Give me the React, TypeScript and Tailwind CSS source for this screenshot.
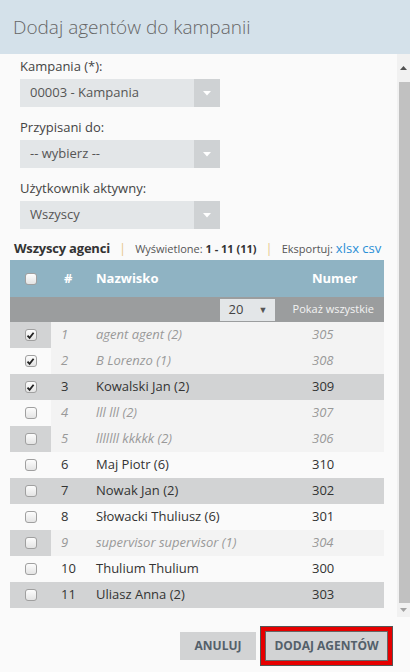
import React from "react";

type Agent = { n: number; name: string; num: string; active: boolean; checked: boolean };

const agents: Agent[] = [
  { n: 1, name: "agent agent (2)", num: "305", active: false, checked: true },
  { n: 2, name: "B Lorenzo (1)", num: "308", active: false, checked: true },
  { n: 3, name: "Kowalski Jan (2)", num: "309", active: true, checked: true },
  { n: 4, name: "lll lll (2)", num: "307", active: false, checked: false },
  { n: 5, name: "lllllll kkkkk (2)", num: "306", active: false, checked: false },
  { n: 6, name: "Maj Piotr (6)", num: "310", active: true, checked: false },
  { n: 7, name: "Nowak Jan (2)", num: "302", active: true, checked: false },
  { n: 8, name: "Słowacki Thuliusz (6)", num: "301", active: true, checked: false },
  { n: 9, name: "supervisor supervisor (1)", num: "304", active: false, checked: false },
  { n: 10, name: "Thulium Thulium", num: "300", active: true, checked: false },
  { n: 11, name: "Uliasz Anna (2)", num: "303", active: true, checked: false },
];

function Checkbox({ checked }: { checked?: boolean }) {
  return (
    <span className="flex h-[12px] w-[12px] items-center justify-center rounded-[3px] border border-[#a0a0a0] bg-gradient-to-b from-[#fdfdfd] to-[#e4e4e4]">
      {checked && (
        <svg width="9" height="9" viewBox="0 0 9 9">
          <path d="M1.5 4.6 L3.6 6.8 L7.6 1.8" fill="none" stroke="#222" strokeWidth="1.8" />
        </svg>
      )}
    </span>
  );
}

function Select({ value }: { value: string }) {
  return (
    <div className="flex h-[28px] w-[200px] bg-[#e3e6e8]">
      <div className="flex flex-1 items-center pl-[10px] text-[13px] text-[#555]">{value}</div>
      <div className="flex w-[26px] items-center justify-center bg-[#cfd2d4]">
        <svg width="8" height="5" viewBox="0 0 8 5">
          <path d="M0 0 H8 L4 4.5 Z" fill="#fff" />
        </svg>
      </div>
    </div>
  );
}

function Field({ label, value }: { label: string; value: string }) {
  return (
    <div className="mb-[11px]">
      <div className="mb-[4px] h-[18px] text-[13px] leading-[18px] text-[#444]">{label}</div>
      <Select value={value} />
    </div>
  );
}

export default function App() {
  return (
    <div className="flex h-[672px] w-[410px] flex-col overflow-hidden bg-[#fafafa] font-['Open_Sans',sans-serif]">
      {/* Header */}
      <div className="flex h-[54px] shrink-0 items-center bg-[#d4e1ea] px-[13px] text-[19px] font-light text-[#666]">
        Dodaj agentów do kampanii
      </div>

      {/* Body */}
      <div className="flex h-[563px] shrink-0">
        <div className="flex-1 overflow-hidden pl-[10px] pr-[13px] pt-[3px]">
          <div className="pl-[10px]">
            <Field label="Kampania (*):" value="00003 - Kampania" />
            <Field label="Przypisani do:" value="-- wybierz --" />
            <Field label="Użytkownik aktywny:" value="Wszyscy" />
          </div>

          <div className="-mt-[1px] flex h-[20px] items-center whitespace-nowrap pl-[4px] text-[11px] text-[#555]">
            <span className="text-[13px] font-bold tracking-[-0.2px] text-[#333]">Wszyscy agenci</span>
            <span className="mx-[9px] text-[13px] text-[#e7c98f]">|</span>
            <span>
              Wyświetlone: <b className="font-bold text-[#333]">1 - 11 (11)</b>
            </span>
            <span className="mx-[9px] text-[13px] text-[#e7c98f]">|</span>
            <span>
              Eksportuj: <span className="text-[13px] text-[#2a8fd6]">xlsx csv</span>
            </span>
          </div>

          <div className="mt-[1px] w-[374px]">
            <div className="flex h-[37px] items-center bg-[#8fb3c3] text-[13px] font-bold text-white">
              <div className="flex w-[41px] justify-center">
                <Checkbox />
              </div>
              <div className="w-[45px] pl-[13px]">#</div>
              <div className="flex-1">Nazwisko</div>
              <div className="w-[72px]">Numer</div>
            </div>
            <div className="flex h-[25px] items-center justify-end bg-[#9b9d9e] pr-[10px]">
              <div className="flex h-[22px] w-[55px] items-center justify-between bg-[#e3e6e8] pl-[9px] pr-[7px] text-[13px] text-[#444]">
                <span>20</span>
                <span className="text-[9px] text-[#555]">▼</span>
              </div>
              <span className="ml-[18px] text-[11px] text-[#f3f3f3]">Pokaż wszystkie</span>
            </div>

            {agents.map((a) => {
              const odd = a.n % 2 === 1;
              const cbBg = odd ? "bg-[#d2d3d4]" : "bg-[#fafafa]";
              const restBg = a.active ? (odd ? "bg-[#d2d3d4]" : "bg-[#fafafa]") : "bg-[#f3f3f3]";
              const txt = a.active ? "text-[#333]" : "italic text-[#999]";
              return (
                <div key={a.n} className="flex h-[26px] text-[13px]">
                  <div className={`flex w-[41px] items-center justify-center ${cbBg}`}>
                    <Checkbox checked={a.checked} />
                  </div>
                  <div className={`flex flex-1 items-center ${restBg} ${txt}`}>
                    <div className="w-[45px] pl-[10px]">{a.n}</div>
                    <div className="flex-1">{a.name}</div>
                    <div className="w-[72px]">{a.num}</div>
                  </div>
                </div>
              );
            })}
          </div>
        </div>

        {/* Scrollbar */}
        <div className="flex w-[13px] flex-col items-end bg-[#f1f1f1]">
          <div className="flex h-[28px] w-full items-center justify-center">
            <svg width="7" height="4" viewBox="0 0 7 4">
              <path d="M0 4 L3.5 0 L7 4 Z" fill="#505050" />
            </svg>
          </div>
          <div className="w-[11px] flex-1 bg-[#c1c1c1]" />
          <div className="flex h-[14px] w-full items-center justify-center">
            <svg width="7" height="4" viewBox="0 0 7 4">
              <path d="M0 0 L7 0 L3.5 4 Z" fill="#a3a3a3" />
            </svg>
          </div>
        </div>
      </div>

      {/* Footer */}
      <div className="flex flex-1 items-center justify-end gap-[10px] bg-[#fafafa] pr-[23px] pt-[3px]">
        <button className="h-[28px] w-[76px] bg-[#d2d3d4] text-[12px] font-bold uppercase text-[#54606a]">
          Anuluj
        </button>
        <button className="h-[28px] w-[121px] bg-[#d2d3d4] text-[12px] font-bold uppercase text-[#54606a] shadow-[0_0_0_1px_#666,0_0_0_5px_#e60000,0_0_0_6px_#555]">
          Dodaj agentów
        </button>
      </div>
    </div>
  );
}
